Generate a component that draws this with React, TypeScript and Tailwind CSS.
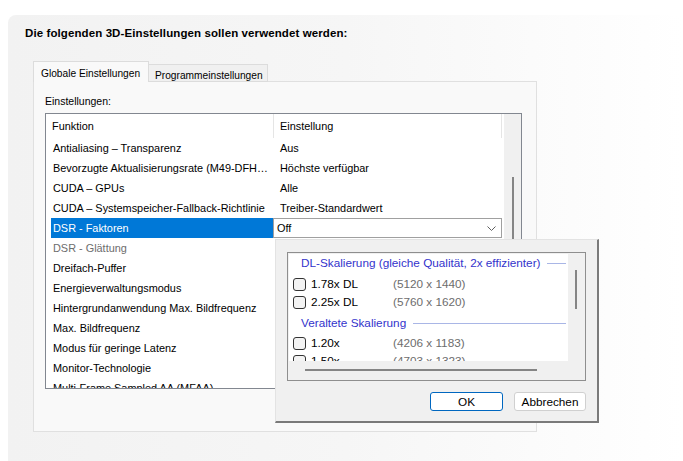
import React from 'react';

const rows = [
  { name: 'Antialiasing – Transparenz', value: 'Aus' },
  { name: 'Bevorzugte Aktualisierungsrate (M49-DFH…', value: 'Höchste verfügbar' },
  { name: 'CUDA – GPUs', value: 'Alle' },
  { name: 'CUDA – Systemspeicher-Fallback-Richtlinie', value: 'Treiber-Standardwert' },
  { name: 'DSR - Faktoren', value: 'Off', selected: true },
  { name: 'DSR - Glättung', value: '', disabled: true },
  { name: 'Dreifach-Puffer', value: '' },
  { name: 'Energieverwaltungsmodus', value: '' },
  { name: 'Hintergrundanwendung Max. Bildfrequenz', value: '' },
  { name: 'Max. Bildfrequenz', value: '' },
  { name: 'Modus für geringe Latenz', value: '' },
  { name: 'Monitor-Technologie', value: '' },
  { name: 'Multi-Frame Sampled AA (MFAA)', value: '' },
];

const dlFactors = [
  { label: '1.78x DL', res: '(5120 x 1440)' },
  { label: '2.25x DL', res: '(5760 x 1620)' },
];

const legacyFactors = [
  { label: '1.20x', res: '(4206 x 1183)' },
  { label: '1.50x', res: '(4703 x 1323)' },
];

const ui = "font-['Liberation_Sans',Arial,sans-serif]";

const Checkbox: React.FC = () => (
  <span className="w-[13px] h-[13px] shrink-0 rounded-[3px] border border-[#333] bg-[#f3f3f3]" />
);

const FactorRow: React.FC<{ label: string; res: string }> = ({ label, res }) => (
  <div className="flex items-center h-[18px] pl-[4px] whitespace-nowrap">
    <Checkbox />
    <span className="ml-[5px] w-[82px] text-black">{label}</span>
    <span className="text-[#6d6d6d]">{res}</span>
  </div>
);

const GroupHeader: React.FC<{ title: string }> = ({ title }) => (
  <div className="flex items-center h-[18px] pl-[12px] pr-[2px]">
    <span className="text-[#3333cc] whitespace-nowrap">{title}</span>
    <span className="flex-1 ml-[7px] h-px bg-[#a9b6e6]" />
  </div>
);

const DsrPopup: React.FC = () => (
  <div className="absolute left-[229px] top-[125px] w-[324px] h-[184px] bg-[#f0f0f0] border-l border-t border-[#e3e3e3] border-r-2 border-b-2 border-r-[#7a7a7a] border-b-[#7a7a7a] pt-[12px] pl-[11px] pr-[11px] flex flex-col">
    <div className="w-[299px] h-[129px] border border-[#8e8e8e] p-px flex flex-col">
      <div className="flex flex-1 min-h-0">
        <div className="flex-1 bg-white overflow-hidden text-[11.75px]">
          <GroupHeader title="DL-Skalierung (gleiche Qualität, 2x effizienter)" />
          <div className="h-[3px]" />
          {dlFactors.map(f => (
            <FactorRow key={f.label} {...f} />
          ))}
          <div className="h-[3px]" />
          <GroupHeader title="Veraltete Skalierung" />
          <div className="h-[2px]" />
          {legacyFactors.map(f => (
            <FactorRow key={f.label} {...f} />
          ))}
        </div>
        {/* vertical scrollbar */}
        <div className="w-[16px] bg-[#f0f0f0] pt-[16px] flex justify-center">
          <span className="w-[2px] h-[39px] bg-[#858585]" />
        </div>
      </div>
      {/* horizontal scrollbar */}
      <div className="h-[18px] bg-[#f0f0f0] pl-[16px] flex items-center">
        <span className="w-[232px] h-[2px] bg-[#858585]" />
      </div>
    </div>
    <div className="flex justify-end gap-[11px] mt-[11px] text-[11.75px]">
      <button className="w-[73px] h-[19px] rounded-[3px] border border-[#0067c0] bg-white text-black leading-none">
        OK
      </button>
      <button className="w-[72px] h-[19px] rounded-[3px] border border-[#d0d0d0] bg-white text-black leading-none">
        Abbrechen
      </button>
    </div>
  </div>
);

const App: React.FC = () => {
  return (
    <div className={`w-[683px] h-[461px] bg-white pl-[8px] pt-[15px] overflow-hidden ${ui}`}>
      <div className="h-full rounded-tl-[8px] bg-gradient-to-r from-[#f2f2f2] via-[#f6f6f6] to-white">
        {/* Heading */}
        <div className="pl-[17px] pt-[10px] h-[46px] text-[11.5px] tracking-[0.1px] font-bold text-black whitespace-nowrap">
          Die folgenden 3D-Einstellungen sollen verwendet werden:
        </div>

        {/* Tabs */}
        <div className="pl-[25px] flex items-end h-[21px] text-[10.2px] whitespace-nowrap">
          <div className="relative z-10 w-[116px] h-[21px] border border-b-0 border-[#dcdcdc] bg-[#f9f9f9] pl-[7px] pt-[4px] text-black">
            Globale Einstellungen
          </div>
          <div className="w-[119px] h-[18px] border border-l-0 border-[#dcdcdc] bg-[#f0f0f0] pl-[6px] pt-[3px] text-black">
            Programmeinstellungen
          </div>
        </div>

        {/* Tab panel */}
        <div className="ml-[25px] -mt-px w-[504px] h-[351px] border border-[#e0e0e0] bg-[#f9f9f9] pl-[11px] pt-[12px]">
          <div className="text-[10.5px] h-[19px] text-black">Einstellungen:</div>
          <div className="relative w-[477px] h-[276px] border border-[#828790] bg-white flex">
            <div className="flex-1 overflow-hidden text-[10.9px]">
              {/* header */}
              <div className="flex h-[24px] items-center">
                <div className="w-[228px] h-full pl-[6px] flex items-center border-r border-[#e5e5e5]">Funktion</div>
                <div className="w-[228px] h-full pl-[6px] flex items-center border-r border-[#e5e5e5]">Einstellung</div>
              </div>
              {rows.map(r => (
                <div key={r.name} className="flex h-[20px] pl-[5px]">
                  <div
                    className={`w-[222px] pl-[2px] flex items-center whitespace-nowrap overflow-hidden ${
                      r.selected ? 'bg-[#0078d7] text-white' : r.disabled ? 'text-[#6d6d6d]' : 'text-black'
                    }`}
                  >
                    {r.name}
                  </div>
                  {r.selected ? (
                    <div className="w-[229px] border border-[#a0a0a0] bg-white flex items-center pl-[3px] pr-[5px] justify-between">
                      <span>Off</span>
                      <svg width="9" height="5" viewBox="0 0 9 5" fill="none">
                        <path d="M0.5 0.5 L4.5 4.5 L8.5 0.5" stroke="#606060" strokeWidth="1" />
                      </svg>
                    </div>
                  ) : (
                    <div className="pl-[7px] flex items-center whitespace-nowrap">{r.value}</div>
                  )}
                </div>
              ))}
            </div>
            {/* scrollbar */}
            <div className="w-[17px] bg-[#f0f0f0] pt-[63px] flex justify-center">
              <span className="w-[2px] h-[120px] bg-[#858585]" />
            </div>
            <DsrPopup />
          </div>
        </div>
      </div>
    </div>
  );
};

export default App;
